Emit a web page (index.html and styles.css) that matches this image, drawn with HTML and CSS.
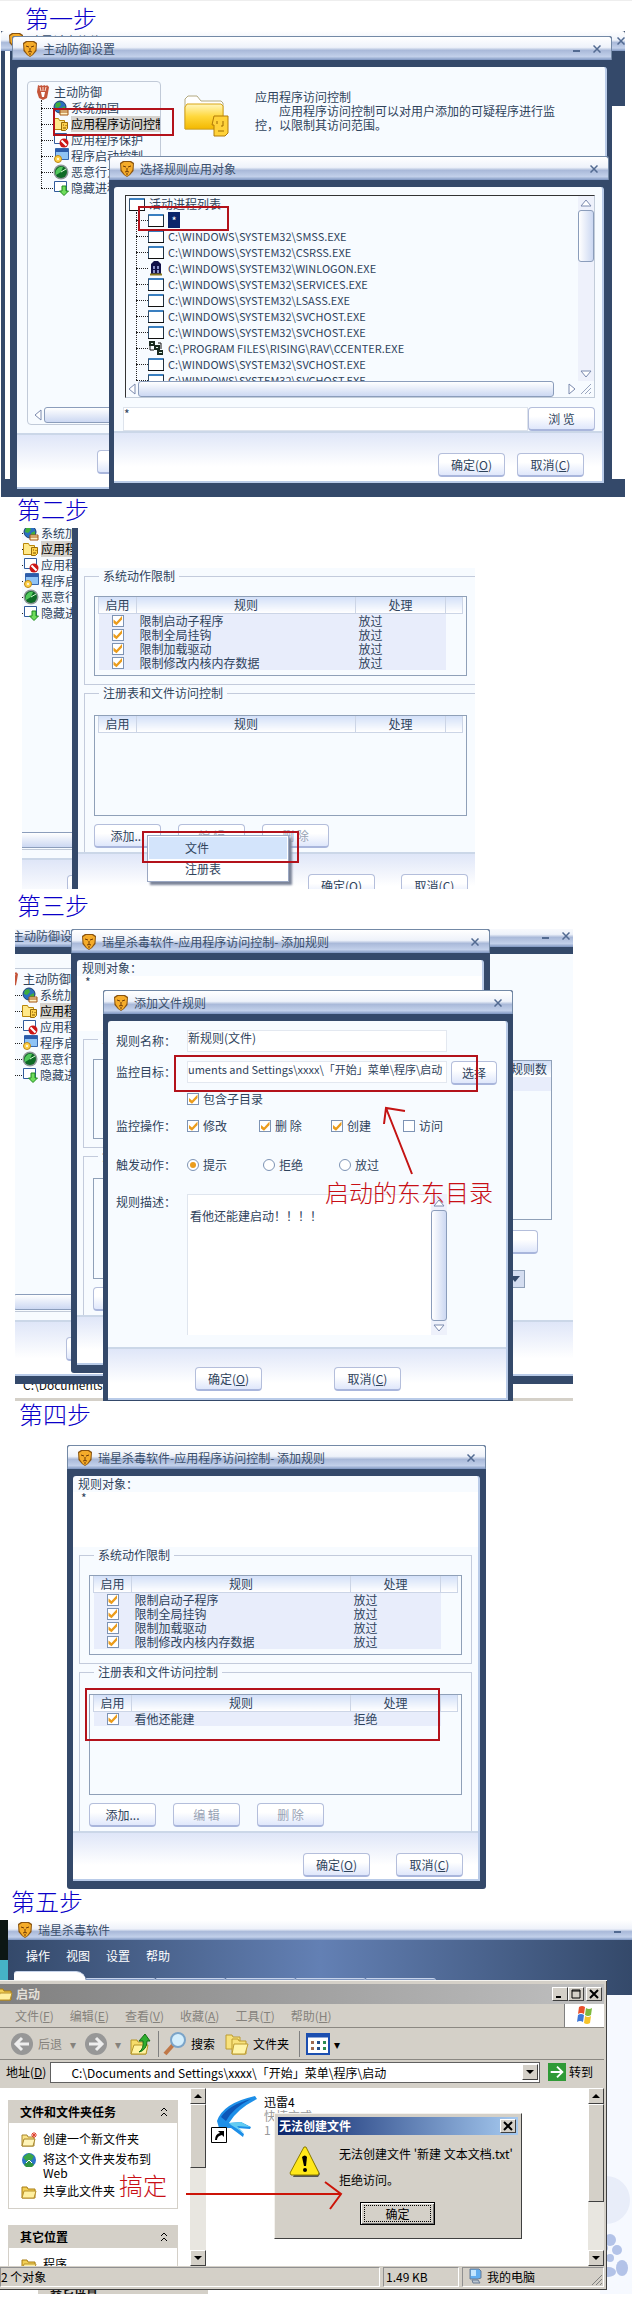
FILE: index.html
```
<!DOCTYPE html>
<html lang="zh-CN">
<head>
    <meta charset="UTF-8">
    <meta name="viewport" content="width=device-width, initial-scale=1.0">
    <title>瑞星主动防御设置步骤</title>
    <link rel="stylesheet" href="styles.css">
</head>
<body>
    <!-- shared icons -->
    <svg class="sprite" aria-hidden="true">
        <symbol id="lion" viewBox="0 0 14 16">
            <path d="M0 2 3 0h8l3 2-.5 8L10 14l-3 2-3-2-3.500-4z" fill="#8a5410"/>
            <path d="M1 3 4 1h6l3 2-.6 6L9 14l-2 1-2-1-3.400-5z" fill="#f5ac2a"/>
            <path d="M3 5l3 1M11 5 8 6M7 7v3M5 11l2-.5 2 .5M6 13h2" stroke="#6d3905" fill="none"/>
        </symbol>
        <symbol id="close" viewBox="0 0 8 8"><path d="M.5.5l7 7M7.500.5l-7 7" stroke="#526a91" stroke-width="1.500"/></symbol>
        <symbol id="min" viewBox="0 0 8 8"><path d="M0 6h7" stroke="#526a91" stroke-width="2"/></symbol>
        <symbol id="hand" viewBox="0 0 16 16">
            <path d="M2 1l2 1 1-1 2 1 1-1 2 1 1-1 2 2-1 6-1 5-4 2-4-2-2-6z" fill="#c4553a"/>
            <path d="M4 3l1 4M7 3v4M10 3 9 7" stroke="#ffe3d6"/>
            <path d="M5 8h4l-1 5H6z" fill="#fff"/>
        </symbol>
        <symbol id="globe" viewBox="0 0 16 16">
            <circle cx="7" cy="7" r="6" fill="#2a6fc0" stroke="#1b3f70"/>
            <path d="M3 3l4-1 1 3-3 3-3-1zM8 8l4-2v4l-3 2z" fill="#3fae3c"/>
            <path d="M7 10h8v5H7z" fill="#fff1c4" stroke="#a4550e"/><path d="M7 12h8" stroke="#a4550e"/>
        </symbol>
        <symbol id="app" viewBox="0 0 16 16">
            <path d="M.5 2.500h5l1 2h5v9H.5z" fill="#ffe98a" stroke="#b8860b"/>
            <path d="M8.500 6.500h6v6l-2 2h-4z" fill="#ffd24a" stroke="#9a6c08"/>
            <path d="M10 9h1M13 9v1M10 12h3" stroke="#7a5200"/>
        </symbol>
        <symbol id="deny" viewBox="0 0 16 16">
            <path d="M1.500 1.500h12v10h-12z" fill="#fff" stroke="#315b9c"/>
            <circle cx="11" cy="11" r="4.500" fill="#cc1515"/><path d="M8.500 8.500l5 5" stroke="#fff" stroke-width="2"/>
        </symbol>
        <symbol id="start" viewBox="0 0 16 16">
            <path d="M2.500.5h13v11h-13z" fill="#8ec3f5" stroke="#3566ad"/><path d="M2 1h13v3H2z" fill="#2b5cab"/>
            <circle cx="5" cy="11" r="3.500" fill="#ffd24a" stroke="#bb8514"/><circle cx="5" cy="11" r="1" fill="#fff"/>
        </symbol>
        <symbol id="radar" viewBox="0 0 16 16">
            <circle cx="8" cy="8" r="7.500" fill="#8e9798"/><circle cx="8" cy="8" r="6" fill="#0e6b26"/>
            <path d="M8 8 3 11a6 6 0 0 1 7-8z" fill="#52c95c"/><path d="M8 8l5-3" stroke="#d7ffd4"/>
        </symbol>
        <symbol id="down" viewBox="0 0 16 16">
            <path d="M1.500 1.500h12v10h-12z" fill="#fff" stroke="#315b9c"/>
            <path d="M9 6h4v5h2.500L11 15.500 6.500 11H9z" fill="#6fdc5c" stroke="#1d8a1d"/>
        </symbol>
        <symbol id="exe" viewBox="0 0 16 16"><path d="M.5 2.500h15v12H.5z" fill="#fff" stroke="#31506f"/><path d="M1 3h14" stroke="#3a7fc0" stroke-width="2"/><path d="M0 14.500h16V3" stroke="#111" fill="none"/></symbol>
        <symbol id="logon" viewBox="0 0 16 16"><path d="M3 14V4l3-3h4l3 3v10z" fill="#101048"/><path d="M5 6h2v3H5zM9 6h2v3H9zM5 10h2v3H5zM9 10h2v3H9z" fill="#8890c8"/><path d="M2 14.500h12" stroke="#8a7a20" stroke-width="2"/></symbol>
        <symbol id="center" viewBox="0 0 16 16"><path d="M1 1h6v5H1zM6 5h6v5H6zM9 10h6v5H9z" fill="#1a2a20"/><path d="M3 3h2v1H3zM8 7h2v1H8zM11 12h3v1h-3z" fill="#d8f0e0"/><path d="M2 6v4h4M10 3h3v6" stroke="#111" fill="none"/></symbol>
        <symbol id="folder" viewBox="0 0 16 16">
            <path d="M1 3h5l1 2h7v9H1z" fill="#f2cf55" stroke="#a87c12"/><path d="M3 7h12l-2 7H1z" fill="#fff0a0" stroke="#b8902a"/>
        </symbol>
        <symbol id="left" viewBox="0 0 8 12"><path d="M7 1v10L1 6z" fill="#fff" stroke="#7b8aae"/></symbol>
        <symbol id="right" viewBox="0 0 8 12"><path d="M1 1v10l6-5z" fill="#fff" stroke="#7b8aae"/></symbol>
        <symbol id="up" viewBox="0 0 12 8"><path d="M1 7h10L6 1z" fill="#fff" stroke="#7b8aae"/></symbol>
        <symbol id="dn" viewBox="0 0 12 8"><path d="M1 1h10L6 7z" fill="#fff" stroke="#7b8aae"/></symbol>
    </svg>

    <h2 class="step first">第一步</h2>
    <section class="shot shot1">
        <div class="back-win">
            <div class="titlebar"><svg class="lion"><use href="#lion"/></svg><span>瑞星杀毒软件</span>
                <button class="tb" aria-label="关闭"><svg><use href="#close"/></svg></button></div>
            <div class="back-body"></div>
        </div>

        <div class="win settings">
            <div class="titlebar"><svg class="lion"><use href="#lion"/></svg><span>主动防御设置</span>
                <button class="tb" aria-label="最小化"><svg><use href="#min"/></svg></button>
                <button class="tb" aria-label="关闭"><svg><use href="#close"/></svg></button></div>
            <div class="panel">
                <div class="main">
                    <div class="tree-box">
                        <div class="root"><svg><use href="#hand"/></svg>主动防御</div>
                        <ul class="tree">
                            <li><svg><use href="#globe"/></svg><span>系统加固</span></li>
                            <li><svg><use href="#app"/></svg><span class="sel">应用程序访问控制</span></li>
                            <li><svg><use href="#deny"/></svg><span>应用程序保护</span></li>
                            <li><svg><use href="#start"/></svg><span>程序启动控制</span></li>
                            <li><svg><use href="#radar"/></svg><span>恶意行为检测</span></li>
                            <li><svg><use href="#down"/></svg><span>隐藏进程检测</span></li>
                        </ul>
                        <div class="hscroll"><svg><use href="#left"/></svg><i class="thumb"></i></div>
                    </div>
                    <svg class="big-folder" viewBox="0 0 46 42">
                        <defs><linearGradient id="gold" x1="0" y1="0" x2="0" y2="1"><stop offset="0" stop-color="#fff6c0"/><stop offset=".5" stop-color="#ffd83c"/><stop offset="1" stop-color="#f3b800"/></linearGradient></defs>
                        <path d="M2 34V4l3-3h9l4 5h20l2 2v26z" fill="#fff" stroke="#b3a980"/>
                        <path d="M2 34V12l2-3h34l2 2v23z" fill="url(#gold)" stroke="#d9a514"/>
                        <path d="M31 21h14v17l-3 3H31V30h-2z" fill="#ffd23a" stroke="#b17b09"/>
                        <path d="M34 26v3M40 26v5h-2M35 36h6" stroke="#9c6800" fill="none"/>
                    </svg>
                    <div class="intro">
                        <p>应用程序访问控制</p>
                        <p class="indent">应用程序访问控制可以对用户添加的可疑程序进行监控，以限制其访问范围。</p>
                    </div>
                </div>
                <div class="foot left"><button class="btn"></button></div>
            </div>
        </div>

        <div class="win picker">
            <div class="titlebar"><svg class="lion"><use href="#lion"/></svg><span>选择规则应用对象</span>
                <button class="tb" aria-label="关闭"><svg><use href="#close"/></svg></button></div>
            <div class="panel">
                <div class="proc-box">
                    <div class="procs">
                        <div class="root"><svg><use href="#exe"/></svg>活动进程列表</div>
                        <ul class="tree">
                            <li><svg><use href="#exe"/></svg><span class="star">*</span></li>
                            <li><svg><use href="#exe"/></svg><span>C:\WINDOWS\SYSTEM32\SMSS.EXE</span></li>
                            <li><svg><use href="#exe"/></svg><span>C:\WINDOWS\SYSTEM32\CSRSS.EXE</span></li>
                            <li><svg><use href="#logon"/></svg><span>C:\WINDOWS\SYSTEM32\WINLOGON.EXE</span></li>
                            <li><svg><use href="#exe"/></svg><span>C:\WINDOWS\SYSTEM32\SERVICES.EXE</span></li>
                            <li><svg><use href="#exe"/></svg><span>C:\WINDOWS\SYSTEM32\LSASS.EXE</span></li>
                            <li><svg><use href="#exe"/></svg><span>C:\WINDOWS\SYSTEM32\SVCHOST.EXE</span></li>
                            <li><svg><use href="#exe"/></svg><span>C:\WINDOWS\SYSTEM32\SVCHOST.EXE</span></li>
                            <li><svg><use href="#center"/></svg><span>C:\PROGRAM FILES\RISING\RAV\CCENTER.EXE</span></li>
                            <li><svg><use href="#exe"/></svg><span>C:\WINDOWS\SYSTEM32\SVCHOST.EXE</span></li>
                            <li><svg><use href="#exe"/></svg><span>C:\WINDOWS\SYSTEM32\SVCHOST.EXE</span></li>
                        </ul>
                    </div>
                    <div class="vscroll"><svg><use href="#up"/></svg><i class="thumb short"></i><svg class="end"><use href="#dn"/></svg></div>
                    <div class="hscroll"><svg><use href="#left"/></svg><i class="thumb"></i><svg><use href="#right"/></svg></div>
                    <svg class="grip" viewBox="0 0 12 12"><path d="M1 11 11 1M5 11l6-6M9 11l2-2" stroke="#9aa6bf"/></svg>
                </div>
                <div class="browse"><input type="text" value="*" aria-label="对象"><button class="btn">浏 览</button></div>
                <div class="foot"><button class="btn">确定(<u>O</u>)</button><button class="btn">取消(<u>C</u>)</button></div>
            </div>
        </div>
        <div class="mark mark1a"></div>
        <div class="mark mark1b"></div>
    </section>

    <h2 class="step">第二步</h2>
    <section class="shot shot2">
        <div class="win settings">
            <div class="titlebar"></div>
            <div class="panel">
                <div class="main">
                    <div class="tree-box">
                        <div class="root"><svg><use href="#hand"/></svg></div>
                        <ul class="tree">
                            <li><svg><use href="#globe"/></svg><span>系统加固</span></li>
                            <li><svg><use href="#app"/></svg><span class="sel">应用程序访问控制</span></li>
                            <li><svg><use href="#deny"/></svg><span>应用程序保护</span></li>
                            <li><svg><use href="#start"/></svg><span>程序启动控制</span></li>
                            <li><svg><use href="#radar"/></svg><span>恶意行为检测</span></li>
                            <li><svg><use href="#down"/></svg><span>隐藏进程检测</span></li>
                        </ul>
                        <div class="hscroll"><svg><use href="#left"/></svg><i class="thumb"></i></div>
                    </div>
                </div>
                <div class="foot left"><button class="btn"></button></div>
            </div>
        </div>

        <div class="win rules">
            <div class="titlebar"></div>
            <div class="panel">
                <div class="target"></div>
                <div class="target-list"></div>
                <fieldset>
                    <legend>系统动作限制</legend>
                    <div class="list">
                        <table>
                            <thead><tr><th class="c1">启用</th><th class="c2">规则</th><th class="c3">处理</th><th></th></tr></thead>
                            <tbody>
                                <tr><td><input type="checkbox" checked aria-label="限制启动子程序"></td><td>限制启动子程序</td><td>放过</td><td></td></tr>
                                <tr><td><input type="checkbox" checked aria-label="限制全局挂钩"></td><td>限制全局挂钩</td><td>放过</td><td></td></tr>
                                <tr><td><input type="checkbox" checked aria-label="限制加载驱动"></td><td>限制加载驱动</td><td>放过</td><td></td></tr>
                                <tr><td><input type="checkbox" checked aria-label="限制修改内核内存数据"></td><td>限制修改内核内存数据</td><td>放过</td><td></td></tr>
                            </tbody>
                        </table>
                    </div>
                </fieldset>
                <fieldset>
                    <legend>注册表和文件访问控制</legend>
                    <div class="list tall">
                        <table>
                            <thead><tr><th class="c1">启用</th><th class="c2">规则</th><th class="c3">处理</th><th></th></tr></thead>
                        </table>
                    </div>
                    <div class="tools"><button class="btn">添加...</button><button class="btn" disabled>编 辑</button><button class="btn" disabled>删 除</button></div>
                </fieldset>
                <div class="foot"><button class="btn">确定(O)</button><button class="btn">取消(C)</button></div>
            </div>
        </div>
        <div class="popup">
            <button class="on">文件</button>
            <button>注册表</button>
        </div>
        <div class="mark mark2"></div>
    </section>

    <h2 class="step third">第三步</h2>
    <section class="shot shot3">
        <div class="under">C:\Documents and Settings</div>
        <div class="win settings">
            <div class="titlebar"><svg class="lion"><use href="#lion"/></svg><span>主动防御设置</span>
                <button class="tb" aria-label="最小化"><svg><use href="#min"/></svg></button>
                <button class="tb" aria-label="关闭"><svg><use href="#close"/></svg></button></div>
            <div class="panel">
                <div class="main">
                    <div class="tree-box">
                        <div class="root"><svg><use href="#hand"/></svg>主动防御</div>
                        <ul class="tree">
                            <li><svg><use href="#globe"/></svg><span>系统加固</span></li>
                            <li><svg><use href="#app"/></svg><span class="sel">应用程序访问控制</span></li>
                            <li><svg><use href="#deny"/></svg><span>应用程序保护</span></li>
                            <li><svg><use href="#start"/></svg><span>程序启动控制</span></li>
                            <li><svg><use href="#radar"/></svg><span>恶意行为检测</span></li>
                            <li><svg><use href="#down"/></svg><span>隐藏进程检测</span></li>
                        </ul>
                        <div class="hscroll"><svg><use href="#left"/></svg><i class="thumb"></i></div>
                    </div>
                    <div class="side">
                        <p class="side-text">监</p>
                        <div class="side-list"><div class="side-head">规则数</div><div class="side-row"></div></div>
                        <button class="btn"></button>
                        <div class="drop"><svg viewBox="0 0 10 6"><path d="M0 0h10L5 6z" fill="#34496a"/></svg></div>
                    </div>
                </div>
                <div class="foot left"><button class="btn"></button></div>
            </div>
        </div>

        <div class="win rules">
            <div class="titlebar"><svg class="lion"><use href="#lion"/></svg><span>瑞星杀毒软件-应用程序访问控制- 添加规则</span>
                <button class="tb" aria-label="关闭"><svg><use href="#close"/></svg></button></div>
            <div class="panel">
                <div class="target">规则对象：</div>
                <div class="target-list">*</div>
                <fieldset>
                    <legend>系统动作限制</legend>
                    <div class="list"></div>
                </fieldset>
                <fieldset>
                    <legend>注册表和文件访问控制</legend>
                    <div class="list tall"></div>
                    <div class="tools"><button class="btn"></button></div>
                </fieldset>
                <div class="foot"></div>
            </div>
        </div>

        <div class="win file-rule">
            <div class="titlebar"><svg class="lion"><use href="#lion"/></svg><span>添加文件规则</span>
                <button class="tb" aria-label="关闭"><svg><use href="#close"/></svg></button></div>
            <div class="panel">
                <form class="form">
                    <div class="row name"><label for="rname">规则名称：</label><input type="text" id="rname" value="新规则(文件)"></div>
                    <div class="row path"><label for="rpath">监控目标：</label><input type="text" id="rpath" value="uments and Settings\xxxx\「开始」菜单\程序\启动"><button type="button" class="btn">选择</button></div>
                    <div class="row sub"><span></span><label><input type="checkbox" checked>包含子目录</label></div>
                    <div class="row ops"><span>监控操作：</span>
                        <label><input type="checkbox" checked>修改</label>
                        <label><input type="checkbox" checked>删 除</label>
                        <label><input type="checkbox" checked>创建</label>
                        <label><input type="checkbox">访问</label></div>
                    <div class="row acts"><span>触发动作：</span>
                        <label><input type="radio" name="act" checked>提示</label>
                        <label><input type="radio" name="act">拒绝</label>
                        <label><input type="radio" name="act">放过</label></div>
                    <div class="row desc"><label for="rdesc">规则描述：</label>
                        <textarea id="rdesc">看他还能建启动！！！！</textarea>
                        <div class="vscroll"><svg><use href="#up"/></svg><i class="thumb"></i><svg><use href="#dn"/></svg></div></div>
                </form>
                <div class="foot"><button class="btn">确定(<u>O</u>)</button><button class="btn">取消(<u>C</u>)</button></div>
            </div>
        </div>
        <div class="mark mark3"></div>
        <svg class="arrow3" viewBox="0 0 30 70"><path d="M29 68 3 2M1 18 3 2l19 3" fill="none" stroke="#c41414" stroke-width="2"/></svg>
        <div class="note note3">启动的东东目录</div>
    </section>

    <h2 class="step fourth">第四步</h2>
    <section class="shot shot4">
        <div class="win rules">
            <div class="titlebar"><svg class="lion"><use href="#lion"/></svg><span>瑞星杀毒软件-应用程序访问控制- 添加规则</span>
                <button class="tb" aria-label="关闭"><svg><use href="#close"/></svg></button></div>
            <div class="panel">
                <div class="target">规则对象：</div>
                <div class="target-list">*</div>
                <fieldset>
                    <legend>系统动作限制</legend>
                    <div class="list">
                        <table>
                            <thead><tr><th class="c1">启用</th><th class="c2">规则</th><th class="c3">处理</th><th></th></tr></thead>
                            <tbody>
                                <tr><td><input type="checkbox" checked aria-label="限制启动子程序"></td><td>限制启动子程序</td><td>放过</td><td></td></tr>
                                <tr><td><input type="checkbox" checked aria-label="限制全局挂钩"></td><td>限制全局挂钩</td><td>放过</td><td></td></tr>
                                <tr><td><input type="checkbox" checked aria-label="限制加载驱动"></td><td>限制加载驱动</td><td>放过</td><td></td></tr>
                                <tr><td><input type="checkbox" checked aria-label="限制修改内核内存数据"></td><td>限制修改内核内存数据</td><td>放过</td><td></td></tr>
                            </tbody>
                        </table>
                    </div>
                </fieldset>
                <fieldset>
                    <legend>注册表和文件访问控制</legend>
                    <div class="list tall">
                        <table>
                            <thead><tr><th class="c1">启用</th><th class="c2">规则</th><th class="c3">处理</th><th></th></tr></thead>
                            <tbody>
                                <tr><td><input type="checkbox" checked aria-label="看他还能建"></td><td>看他还能建</td><td>拒绝</td><td></td></tr>
                            </tbody>
                        </table>
                    </div>
                    <div class="tools"><button class="btn">添加...</button><button class="btn" disabled>编 辑</button><button class="btn" disabled>删 除</button></div>
                </fieldset>
                <div class="foot"><button class="btn">确定(<u>O</u>)</button><button class="btn">取消(<u>C</u>)</button></div>
            </div>
        </div>
        <div class="mark mark4"></div>
    </section>

    <h2 class="step fifth">第五步</h2>
    <section class="shot shot5">
        <div class="rav">
            <div class="titlebar"><svg class="lion"><use href="#lion"/></svg><span>瑞星杀毒软件</span>
                <button class="tb" aria-label="最小化"><svg><use href="#min"/></svg></button></div>
            <div class="rav-head">
                <nav><a href="#">操作</a><a href="#">视图</a><a href="#">设置</a><a href="#">帮助</a></nav>
                <div class="tabs"><i class="on"></i><i></i><i></i><i></i><i></i><i></i></div>
            </div>
            <svg class="flower" viewBox="0 0 34 150"><circle cx="8" cy="30" r="24" fill="#e8edf9"/><g fill="#b3c3e8"><circle cx="12" cy="70" r="6"/><circle cx="5" cy="78" r="5"/><circle cx="19" cy="80" r="5"/><circle cx="12" cy="88" r="4"/><ellipse cx="10" cy="102" rx="8" ry="5"/><ellipse cx="24" cy="98" rx="6" ry="8"/></g></svg>
        </div>
        <div class="desk"></div>
        <div class="strip"><span>其它位置</span></div>

        <div class="explorer">
            <div class="xp-title"><svg class="i16"><use href="#folder"/></svg><b>启动</b>
                <button class="cap" aria-label="最小化"><svg viewBox="0 0 10 10"><path d="M1 8h5" stroke="#000" stroke-width="2"/></svg></button><button class="cap" aria-label="最大化"><svg viewBox="0 0 10 10"><path d="M1 1h8v8H1zM1 2h8" fill="none" stroke="#000"/></svg></button><button class="cap gap" aria-label="关闭"><svg viewBox="0 0 10 10"><path d="M1 1l8 8M9 1 1 9" stroke="#000" stroke-width="2"/></svg></button></div>
            <div class="xp-menu">
                <a href="#">文件(<u>F</u>)</a><a href="#">编辑(<u>E</u>)</a><a href="#">查看(<u>V</u>)</a><a href="#">收藏(<u>A</u>)</a><a href="#">工具(<u>T</u>)</a><a href="#">帮助(<u>H</u>)</a>
                <div class="flag"><svg viewBox="0 0 20 20"><path d="M4 2q3-2 6 0L9 9q-3-2-6 0z" fill="#e8502c"/><path d="M11 3q3 2 6 0l-1 7q-3 2-6 0z" fill="#7cb93e"/><path d="M3 10q3-2 6 0l-1 7q-3-2-6 0z" fill="#3f78d8"/><path d="M10 11q3 2 6 0l-1 7q-3 2-6 0z" fill="#f6c32a"/></svg></div>
            </div>
            <div class="xp-tools">
                <button class="dim"><svg class="i24" viewBox="0 0 24 24"><circle cx="12" cy="12" r="11" fill="#979797"/><path d="M19 12H7M12 6l-6 6 6 6" fill="none" stroke="#eee" stroke-width="3"/></svg>后退</button>
                <span class="tri">▾</span>
                <button class="dim" aria-label="前进"><svg class="i24" viewBox="0 0 24 24"><circle cx="12" cy="12" r="11" fill="#979797"/><path d="M5 12h12M12 6l6 6-6 6" fill="none" stroke="#eee" stroke-width="3"/></svg></button>
                <span class="tri fwd">▾</span>
                <button class="upbtn" aria-label="向上"><svg class="i24" viewBox="0 0 24 24"><path d="M3 8h6l1 2h8v12H3z" fill="#f5dc6a" stroke="#b59528"/><path d="M6 13h14l-2 9H3z" fill="#fff3a0" stroke="#b59528"/><path d="M11 20q5-3 4-11h-4l6-7 5 7h-3q0 9-8 11z" fill="#2fae2f" stroke="#157015"/></svg></button>
                <button class="search"><svg class="i24" viewBox="0 0 24 24"><path d="M2 22l8-9" stroke="#c07848" stroke-width="4"/><circle cx="15" cy="8" r="7" fill="#d4eefc" stroke="#7ba4c8" stroke-width="2"/></svg>搜索</button>
                <button class="folders"><svg class="i24" viewBox="0 0 24 24"><path d="M1 3h6l1 2h7v12H1z" fill="#f8e27c" stroke="#bd9c30"/><path d="M7 7h6l1 2h7v13H7z" fill="#f8e27c" stroke="#bd9c30"/><path d="M9 12h14l-3 10H7z" fill="#fff4a8" stroke="#bd9c30"/></svg>文件夹</button>
                <button class="views" aria-label="查看方式"><svg class="i24" viewBox="0 0 24 24"><path d="M1 2h22v20H1z" fill="#fff" stroke="#1c4fb0" stroke-width="2"/><path d="M1 4h22" stroke="#1c4fb0" stroke-width="3"/><path d="M5 9h3v3H5zM5 15h3v3H5z" fill="#a06a50"/><path d="M11 9h3v3h-3zM11 15h3v3h-3z" fill="#27508c"/><path d="M17 9h3v3h-3zM17 15h3v3h-3z" fill="#2c8c50"/></svg>▾</button>
            </div>
            <div class="xp-addr">
                <label for="addr">地址(<u>D</u>)</label>
                <div class="addr-box"><input type="text" id="addr" value="C:\Documents and Settings\xxxx\「开始」菜单\程序\启动"><button class="sb" aria-label="展开"><svg viewBox="0 0 8 4"><path d="M0 0h8L4 4z"/></svg></button></div>
                <button class="go"><svg viewBox="0 0 20 20"><path d="M0 0h20v20H0z" fill="#2f9a36"/><path d="M3 10h12M10 4l6 6-6 6" fill="none" stroke="#fff" stroke-width="2"/></svg>转到</button>
            </div>
            <div class="xp-body">
                <aside>
                    <h3>文件和文件夹任务<svg viewBox="0 0 8 10"><path d="M1 4l3-3 3 3M1 9l3-3 3 3" fill="none" stroke="#000"/></svg></h3>
                    <ul>
                        <li><svg class="i16" viewBox="0 0 16 16"><path d="M1 3h5l1 2h6v9H1z" fill="#fbe48a" stroke="#a8862c"/><path d="M3 7h11l-2 7H1z" fill="#fff5b8" stroke="#a8862c"/><path d="M13 0v6M10 3h6M11 1l4 4M15 1l-4 4" stroke="#e0402c"/></svg><a href="#">创建一个新文件夹</a></li>
                        <li><svg class="i16" viewBox="0 0 16 16"><circle cx="8" cy="8" r="7" fill="#2b74c8"/><path d="M2 5l6-4 5 3-2 4-6 1z" fill="#3aa648"/><path d="M3 13l5-6 5 6-2 2H5z" fill="#2f9440"/><path d="M5 11l3-3 3 3" stroke="#fff" fill="none"/></svg><a href="#">将这个文件夹发布到 Web</a></li>
                        <li><svg class="i16"><use href="#folder"/></svg><a href="#">共享此文件夹</a></li>
                    </ul>
                    <h3>其它位置<svg viewBox="0 0 8 10"><path d="M1 4l3-3 3 3M1 9l3-3 3 3" fill="none" stroke="#000"/></svg></h3>
                    <ul><li><svg class="i16"><use href="#folder"/></svg><a href="#">程序</a></li></ul>
                </aside>
                <div class="xp-scroll"><button class="sb" aria-label="上"><svg viewBox="0 0 8 4"><path d="M0 4h8L4 0z"/></svg></button><i></i><button class="sb" aria-label="下"><svg viewBox="0 0 8 4"><path d="M0 0h8L4 4z"/></svg></button></div>
                <div class="files">
                    <svg class="link" viewBox="0 0 48 48"><path d="M6 26Q12 8 44 1l2 3Q26 14 18 28l12-1 10 5-1 2-13-1 7 6-1 3-12-9H8z" fill="#1d8fe8"/><path d="M10 22Q18 10 40 4 22 13 15 26z" fill="#0d57b8"/><path d="M18 28l12-1 9 5-13-1 7 7-13-8z" fill="#63ccf2"/><path d="M.5 32.500h15v15H.5z" fill="#fff" stroke="#000"/><path d="M4 45q0-6 5-7l-2-2h6v6l-2-2q-5 1-5 5z"/></svg>
                    <div><p>迅雷4</p><p class="gray">快捷方式</p><p class="gray">1 KB</p></div>
                </div>
                <div class="xp-scroll wide"><button class="sb" aria-label="上"><svg viewBox="0 0 8 4"><path d="M0 4h8L4 0z"/></svg></button><i></i><button class="sb" aria-label="下"><svg viewBox="0 0 8 4"><path d="M0 0h8L4 4z"/></svg></button></div>
            </div>
            <div class="xp-status"><span class="objs">2 个对象</span><span class="size">1.49 KB</span><span class="where"><svg class="i16" viewBox="0 0 16 16"><path d="M3 1h9l2 2v7l-3 1H3z" fill="#62aef0" stroke="#6a7c94"/><path d="M4 2h5v6H4z" fill="#c4e6ff"/><path d="M5 12h6l2 3H6z" fill="#b8c4d0" stroke="#6a7c94"/></svg>我的电脑<svg class="grip" viewBox="0 0 12 12"><path d="M1 11 11 1M5 11l6-6M9 11l2-2" stroke="#808080"/></svg></span></div>
        </div>

        <div class="alert">
            <div class="alert-title"><b>无法创建文件</b><button class="cap" aria-label="关闭"><svg viewBox="0 0 10 10"><path d="M1 1l8 8M9 1 1 9" stroke="#000" stroke-width="2"/></svg></button></div>
            <div class="alert-body">
                <svg viewBox="0 0 32 32"><path d="M17 2l14 26-2 3H4z" fill="#555"/><path d="M15 1h2l13 26-1 2H2l-1-2z" fill="#ffe81a" stroke="#8c7c00"/><path d="M13 11q3-3 5 0l-1 9h-2z"/><circle cx="16" cy="24" r="2"/></svg>
                <div><p>无法创建文件 '新建 文本文档.txt'</p><p>拒绝访问。</p></div>
            </div>
            <button class="ok"><span>确定</span></button>
        </div>
        <svg class="arrow5" viewBox="0 0 160 30"><path d="M0 13h155M139 1l16 12-11 15" fill="none" stroke="#cc1408" stroke-width="2"/></svg>
        <div class="note note5">搞定</div>
    </section>
</body>
</html>
```
FILE: styles.css
```
* {
    box-sizing: border-box;
}
body {
    margin: 0;
    padding-bottom: 21px;
    background: #fff;
    color: #2f435c;
    font-family: "Noto Sans CJK SC", "Noto Sans", sans-serif;
    font-size: 12px;
    line-height: 16px;
}
p, ul, h3, fieldset, legend {
    margin: 0;
    padding: 0;
}
ul {
    list-style: none;
}
a {
    color: inherit;
    text-decoration: none;
}
button, input, textarea {
    margin: 0;
    padding: 0;
    font: inherit;
    color: inherit;
}
svg {
    display: block;
    flex: none;
}
.sprite {
    position: absolute;
    width: 0;
    height: 0;
}
.i16 {
    width: 16px;
    height: 16px;
}
.i24 {
    width: 24px;
    height: 24px;
}
.step {
    margin: 0;
    padding: 0 0 7px 17px;
    color: #0a00c8;
    font-size: 24px;
    font-weight: 300;
    line-height: 24px;
}
.step.first {
    padding: 5px 0 2px 25px;
    border-top: 1px solid #eee;
    line-height: 23px;
}
.step.third {
    padding: 4px 0 12px 17px;
}
.step.fourth {
    padding: 1px 0 19px 19px;
}
.step.fifth {
    padding-left: 11px;
}

/* each screenshot clips its own windows */
.shot {
    position: relative;
    overflow: hidden;
}
.shot1 {
    height: 466px;
    margin: 0 7px 0 1px;
    background: #fff;
}
.shot2 {
    height: 361px;
    max-width: 453px;
    margin-left: 22px;
}
.shot3 {
    height: 472px;
    max-width: 558px;
    margin-left: 15px;
}
.shot4 {
    height: 444px;
    max-width: 419px;
    margin-left: 67px;
}
.shot5 {
    height: 374px;
}

/* blue skinned windows */
.titlebar {
    display: flex;
    align-items: center;
    flex: none;
    height: 24px;
    padding: 0 10px;
    background: linear-gradient(#fff 0, #eef2fa 45%, #a9b9d9 58%, #c2d0ea 85%, #7d95c0 100%);
    border: 1px solid #7389a6;
    border-bottom: 0;
    border-radius: 3px 3px 0 0;
    color: #3a4f6c;
}
.titlebar span {
    flex: 1;
    margin-left: 6px;
    white-space: nowrap;
}
.titlebar .lion {
    width: 14px;
    height: 16px;
}
.tb {
    width: 8px;
    height: 8px;
    margin-left: 12px;
    background: none;
    border: 0;
}
.tb svg {
    width: 8px;
    height: 8px;
}
.win {
    position: absolute;
    display: flex;
    flex-direction: column;
    padding-bottom: 8px;
    background: #34496a;
    border-radius: 3px;
}
.panel {
    display: flex;
    flex-direction: column;
    flex: 1;
    margin: 7px 5px 0;
    background: #f7fbff;
    border: solid #b9cbe8;
    border-width: 0 2px 2px 0;
    border-radius: 3px 3px 0 0;
}
.btn {
    width: 67px;
    height: 24px;
    background: linear-gradient(#fff 40%, #dfe7fb);
    border: 1px solid #b4bedb;
    border-bottom: 2px solid #a9b6dc;
    border-radius: 4px;
}
.btn:disabled {
    color: #98a2b4;
}
.foot {
    display: flex;
    align-items: flex-start;
    justify-content: flex-end;
    flex: none;
    padding-top: 20px;
    border-top: 2px solid #cbd7e8;
    background: linear-gradient(#dfe6f8, #fff 70%);
}
.thumb {
    display: block;
    flex: 1;
    border: 1px solid #8b9dbb;
    border-radius: 3px;
    background: linear-gradient(#fff, #ccd8f2);
}
.hscroll {
    display: flex;
    align-items: center;
    height: 16px;
}
.hscroll svg {
    width: 8px;
    height: 12px;
    margin: 0 2px;
}
.hscroll .thumb {
    height: 16px;
}
.vscroll {
    display: flex;
    flex-direction: column;
    align-items: center;
    width: 16px;
    background: #eef1fb;
}
.vscroll svg {
    width: 12px;
    height: 8px;
    margin: 3px 0;
}
.vscroll .thumb {
    width: 16px;
    background: linear-gradient(90deg, #fff, #ccd8f2);
}
.vscroll .short {
    flex: none;
    height: 52px;
}
.vscroll .end {
    margin-top: auto;
}
.mark {
    position: absolute;
    border: 2px solid #b3121b;
}
.note {
    position: absolute;
    color: #c80f16;
    font-size: 24px;
    font-weight: 300;
    line-height: 24px;
    white-space: nowrap;
}

/* trees */
.root {
    display: flex;
    gap: 2px;
    height: 16px;
}
.root svg, .tree svg {
    width: 16px;
    height: 16px;
}
.tree {
    position: relative;
    margin-left: 5px;
}
.tree::before {
    content: "";
    position: absolute;
    top: 0;
    bottom: 8px;
    border-left: 1px dotted #222;
}
.tree li {
    display: flex;
    height: 16px;
    white-space: nowrap;
}
.tree li::before {
    content: "";
    flex: none;
    width: 12px;
    height: 8px;
    border-bottom: 1px dotted #222;
}
.tree li span {
    margin-left: 2px;
}
.tree .sel {
    background: #d6d3ce;
    color: #000;
}

/* active defence settings */
.settings {
    left: 11px;
    top: 5px;
    width: 600px;
    height: 461px;
}
.shot2 .settings {
    left: -40px;
    top: -67px;
}
.shot3 .settings {
    left: -34px;
    top: -6px;
}
.main {
    display: flex;
    flex: 1;
    padding: 14px 0 8px 10px;
}
.tree-box {
    display: flex;
    flex-direction: column;
    flex: none;
    width: 134px;
    padding: 2px 0 1px 8px;
    border: 1px solid #c1cad8;
    border-radius: 4px;
    overflow: hidden;
}
.tree-box .hscroll {
    margin: auto -1px 0 -4px;
}
.foot.left {
    justify-content: flex-start;
    height: 54px;
    padding: 15px 0 0 80px;
}
.big-folder {
    width: 46px;
    height: 42px;
    margin: 14px 26px 0 22px;
}
.intro {
    width: 300px;
    margin-top: 9px;
    line-height: 14px;
}
.indent {
    text-indent: 24px;
}
.back-win {
    height: 100%;
    background: linear-gradient(#34496a 75px, #fff 75px, #fff 448px, #34496a 448px);
}
.back-win .titlebar {
    height: 20px;
    padding: 0 0 0 8px;
    border: 0;
}
.back-body {
    width: 11px;
    height: 428px;
    background: linear-gradient(90deg, #34496a 4px, #fff 4px, #fff 9px, #34496a 9px);
}

/* process picker */
.picker {
    left: 108px;
    top: 125px;
    width: 500px;
    height: 335px;
}
.proc-box {
    display: grid;
    grid-template-columns: 1fr 16px;
    grid-template-rows: 1fr 16px;
    height: 203px;
    margin: 8px 7px 0 11px;
    border: 1px solid #c2ccd9;
    border-color: #333 #c2ccd9 #c2ccd9 #333;
}
.procs {
    overflow: hidden;
    padding-left: 3px;
}
.procs .root {
    gap: 4px;
}
.procs .tree {
    margin-left: 7px;
    font-size: 11px;
}
.procs .tree li span {
    margin-left: 4px;
}
.procs .star {
    width: 12px;
    background: #0a246a;
    color: #fff;
    text-align: center;
}
.proc-box .hscroll svg:last-child {
    margin-left: 14px;
}
.proc-box .grip {
    width: 12px;
    height: 12px;
    margin: 2px;
}
.browse {
    display: flex;
    margin: 9px 7px 0 9px;
}
.browse input {
    flex: 1;
    min-width: 0;
    height: 24px;
    padding-bottom: 12px;
    background: #fff;
    border: 1px solid #dde3ec;
}
.picker .foot {
    flex: 1;
    gap: 12px;
    padding-right: 18px;
}

/* rule dialog */
.rules {
    left: 0;
    top: 0;
    width: 419px;
    height: 444px;
}
.shot2 .rules {
    left: 50px;
    top: -62px;
}
.shot3 .rules {
    left: 56px;
    top: 0;
}
.rules .panel {
    margin: 7px 6px 0;
}
.target {
    height: 16px;
    padding-left: 5px;
}
.target-list {
    height: 55px;
    padding-left: 8px;
    background: #fff;
    line-height: 12px;
}
fieldset {
    margin: 0 6px;
    padding: 0 9px 8px;
    border: 1px solid #c3cbdc;
}
legend {
    margin-left: 5px;
    padding: 0 4px;
}
.list {
    height: 80px;
    margin-top: 12px;
    padding: 0 3px;
    border: 1px solid #8fa0b8;
}
.list.tall {
    height: 101px;
    margin-top: 14px;
}
table {
    width: 100%;
    table-layout: fixed;
    border-collapse: collapse;
}
.c1 {
    width: 38px;
}
.c2 {
    width: 219px;
}
.c3 {
    width: 90px;
}
th {
    height: 16px;
    padding: 0;
    border: 1px solid #ccd5e6;
    border-top: 0;
    background: linear-gradient(#d3e0f8, #fff);
    font-weight: normal;
    line-height: 15px;
}
td {
    height: 14px;
    padding: 0 0 0 3px;
    background: #e8edfb;
    line-height: 14px;
}
td:first-child {
    padding: 0;
    text-align: center;
}
td:last-child {
    background: none;
}
input[type=checkbox], input[type=radio] {
    appearance: none;
    display: inline-block;
    width: 12px;
    height: 12px;
    border: 1px solid #7d93b4;
    background: #fff;
    vertical-align: top;
}
input[type=checkbox]:checked::before {
    content: "";
    display: block;
    width: 10px;
    height: 10px;
    background: #eb9c1c;
    clip-path: polygon(10% 40%, 40% 65%, 95% 5%, 95% 40%, 40% 98%, 10% 75%);
}
input[type=radio] {
    border-radius: 50%;
}
input[type=radio]:checked::before {
    content: "";
    display: block;
    width: 6px;
    height: 6px;
    margin: 2px;
    border-radius: 50%;
    background: #eb9c1c;
}
td input[type=checkbox] {
    margin-top: 1px;
}
.tools {
    display: flex;
    gap: 17px;
    margin: 8px 0 -3px;
}
.rules .foot {
    flex: 1;
    gap: 26px;
    margin-top: -2px;
    padding-right: 15px;
}

/* add menu */
.popup {
    position: absolute;
    left: 125px;
    top: 307px;
    display: flex;
    flex-direction: column;
    width: 142px;
    height: 47px;
    padding: 1px;
    background: #fff;
    border: 1px solid #9aa7c2;
    box-shadow: 3px 3px 2px #7b8499;
}
.popup button {
    flex: 1;
    padding-left: 36px;
    background: none;
    border: 0;
    text-align: left;
}
.popup .on {
    background: #d3e4fb;
}

/* add file rule */
.file-rule {
    left: 88px;
    top: 61px;
    width: 410px;
    height: 418px;
}
.form {
    padding: 9px 8px 12px;
}
.row {
    display: flex;
}
.row > :first-child {
    flex: none;
    width: 71px;
}
.row label:not(:first-child) {
    display: flex;
    align-items: center;
    gap: 4px;
    line-height: 14px;
}
.row input[type=text] {
    width: 260px;
    height: 22px;
    padding-bottom: 6px;
    background: #fff;
    border: 1px solid #e3e8f0;
}
.name, .path {
    line-height: 22px;
}
.path {
    margin-top: 9px;
}
.path input[type=text] {
    font-size: 11px;
}
.path .btn {
    width: 46px;
    margin-left: 4px;
}
.sub {
    margin-top: 7px;
}
.ops {
    margin-top: 12px;
}
.ops label {
    width: 72px;
}
.acts {
    margin-top: 23px;
}
.acts label {
    width: 76px;
}
.desc {
    margin-top: 21px;
}
.desc textarea {
    width: 244px;
    height: 141px;
    padding: 13px 0 0 2px;
    background: #fff;
    border: 1px solid #dfe5ee;
    border-width: 1px 0 0 1px;
    resize: none;
    overflow: hidden;
}
.desc .vscroll {
    padding-top: 2px;
}
.file-rule .foot {
    flex: 1;
    justify-content: flex-start;
    gap: 72px;
    padding: 18px 0 0 87px;
}
.side {
    position: relative;
    flex: 1;
    margin: 24px 22px 0 20px;
}
.side-text {
    margin-left: 336px;
}
.side-list {
    height: 160px;
    margin-top: 52px;
    border: 1px solid #8fa0b8;
}
.side-head {
    padding-right: 4px;
    background: linear-gradient(#d3e0f8, #fff);
    text-align: right;
}
.side-row {
    height: 14px;
    background: #e8edfb;
}
.side .btn {
    display: block;
    margin: 10px 14px 0 auto;
}
.drop {
    width: 20px;
    height: 18px;
    margin: 16px 27px 0 auto;
    padding: 5px 4px;
    border: 1px solid #8fa0b8;
    background: #d4ddf0;
}
.under {
    position: absolute;
    left: 0;
    right: 0;
    bottom: 0;
    height: 24px;
    padding: 0 0 0 8px;
    border-bottom: 3px solid #d4d0c8;
    color: #111;
}

/* red marks */
.mark1a {
    left: 52px;
    top: 77px;
    width: 121px;
    height: 28px;
}
.mark1b {
    left: 137px;
    top: 175px;
    width: 91px;
    height: 25px;
}
.mark2 {
    left: 120px;
    top: 303px;
    width: 157px;
    height: 32px;
}
.mark3 {
    left: 159px;
    top: 126px;
    width: 304px;
    height: 37px;
}
.mark4 {
    left: 18px;
    top: 243px;
    width: 355px;
    height: 53px;
}
.arrow3 {
    position: absolute;
    left: 368px;
    top: 177px;
    width: 30px;
    height: 70px;
}
.note3 {
    left: 310px;
    top: 251px;
}
.arrow5 {
    position: absolute;
    left: 186px;
    top: 261px;
    width: 160px;
    height: 30px;
}
.note5 {
    left: 119px;
    top: 253px;
}

/* main program behind explorer */
.rav {
    position: absolute;
    inset: 0 0 0 8px;
    background: #f6f9ff;
}
.rav .titlebar {
    height: 20px;
    border: 0;
    border-radius: 0;
}
.rav-head {
    height: 55px;
    padding: 8px 6px 0;
    background: linear-gradient(90deg, #34496a, #6380b4 50%, #34496a);
}
.rav-head nav {
    display: flex;
    gap: 16px;
    padding-left: 12px;
    color: #fff;
}
.tabs {
    display: flex;
    align-items: flex-end;
    margin-top: 7px;
}
.tabs i {
    width: 70px;
    height: 3px;
    background: #7f97c2;
    border-top: 1px solid #c6d3ea;
    border-radius: 4px 12px 0 0;
}
.tabs .on {
    width: 72px;
    height: 10px;
    background: #fff;
}
.flower {
    position: absolute;
    right: 0;
    bottom: -26px;
    width: 34px;
    height: 150px;
}
.desk {
    position: absolute;
    left: 0;
    top: 0;
    width: 8px;
    height: 60px;
    background: #0c1714;
    border-bottom: 20px solid #46b3c6;
}
.strip {
    position: absolute;
    left: 0;
    bottom: 0;
    width: 600px;
    height: 6px;
    overflow: hidden;
    background: #fff;
    font-weight: bold;
    line-height: 2px;
}
.strip span {
    display: block;
    width: 170px;
    height: 6px;
    margin-left: 38px;
    padding-left: 12px;
    background: #d4d0c8;
    color: #111;
}

/* explorer */
.explorer {
    position: absolute;
    left: 0;
    top: 60px;
    width: 607px;
    height: 310px;
    padding: 3px 3px 4px 0;
    background: #d4d0c8;
    border: 1px solid #f4f2ee;
    border-width: 1px 0 0;
    box-shadow: inset -1px -1px #404040;
    color: #000;
}
.xp-title {
    display: flex;
    align-items: center;
    height: 20px;
    padding-right: 2px;
    background: linear-gradient(90deg, #808080, #c0c0c0);
    color: #e2dfd8;
}
.xp-title svg.i16 {
    margin-left: -3px;
}
.xp-title b {
    flex: 1;
    margin-left: 3px;
}
.cap, .sb {
    display: flex;
    align-items: center;
    justify-content: center;
    width: 16px;
    height: 14px;
    background: #d4d0c8;
    border: 1px solid;
    border-color: #fff #404040 #404040 #fff;
}
.cap svg {
    width: 10px;
    height: 10px;
}
.cap.gap {
    margin-left: 2px;
}
.sb {
    flex: none;
    height: 16px;
}
.sb svg {
    width: 8px;
    height: 4px;
}
.xp-menu {
    display: flex;
    align-items: center;
    gap: 16px;
    height: 24px;
    padding-left: 15px;
    border-bottom: 1px solid #8b8882;
    color: #85827c;
}
.flag {
    width: 40px;
    height: 23px;
    margin-left: auto;
    padding: 1px 10px;
    background: #fff;
    border-left: 1px solid #808080;
}
.flag svg {
    width: 20px;
    height: 20px;
}
.xp-tools {
    display: flex;
    align-items: center;
    height: 32px;
    padding-left: 10px;
    border-bottom: 1px solid #8b8882;
}
.xp-tools button {
    display: flex;
    align-items: center;
    gap: 4px;
    padding: 0;
    background: none;
    border: 0;
}
.xp-tools .dim {
    color: #85827c;
}
.tri {
    width: 22px;
    text-align: center;
    color: #85827c;
}
.tri.fwd {
    width: 20px;
}
.xp-tools .upbtn {
    padding-right: 6px;
}
.xp-tools .search {
    height: 26px;
    padding: 0 10px 0 4px;
    border-left: 1px solid #808080;
}
.xp-tools .folders {
    height: 26px;
    padding-right: 10px;
    border-right: 1px solid #808080;
}
.xp-tools .views {
    margin-left: 6px;
}
.xp-addr {
    display: flex;
    align-items: center;
    height: 24px;
    padding: 0 11px 0 6px;
}
.addr-box {
    display: flex;
    flex: 1;
    align-items: center;
    height: 21px;
    margin: 0 8px 0 4px;
    padding-right: 1px;
    background: #fff;
    border: 1px solid #606060;
}
.addr-box input {
    flex: 1;
    min-width: 0;
    height: 18px;
    padding-left: 20px;
    border: 0;
}
.go {
    display: flex;
    align-items: center;
    gap: 3px;
    background: none;
    border: 0;
}
.go svg {
    width: 18px;
    height: 18px;
}
.xp-body {
    display: flex;
    height: 178px;
    margin-top: 4px;
    background: #fff;
    overflow: hidden;
}
aside {
    width: 190px;
    padding: 12px 12px 0 8px;
}
aside h3 {
    display: flex;
    align-items: center;
    justify-content: space-between;
    height: 23px;
    padding: 0 10px 0 12px;
    background: #d4d0c8;
    font-size: 12px;
    line-height: 23px;
}
aside h3 svg {
    width: 8px;
    height: 10px;
}
aside ul {
    height: 86px;
    margin-bottom: 16px;
    padding: 9px 10px 0 12px;
    border: 1px solid #d4d0c8;
    border-top: 0;
}
aside li {
    display: flex;
    gap: 6px;
    margin-bottom: 4px;
    line-height: 14px;
}
.xp-scroll {
    display: flex;
    flex-direction: column;
    width: 16px;
    background: #e8e6e0;
}
.xp-scroll i {
    height: 64px;
    margin-bottom: auto;
    background: #d4d0c8;
    border: 1px solid;
    border-color: #fff #404040 #404040 #fff;
}
.xp-scroll.wide i {
    height: 98px;
}
.files {
    display: flex;
    flex: 1;
    gap: 5px;
    padding: 7px 0 0 5px;
    line-height: 14px;
}
.link {
    width: 48px;
    height: 48px;
}
.gray {
    color: #999;
}
.xp-status {
    display: flex;
    gap: 3px;
    margin-top: 1px;
    line-height: 18px;
}
.xp-status > span {
    height: 20px;
    border: 1px solid;
    border-color: #909090 #fff #fff #909090;
}
.objs {
    flex: 1;
}
.size {
    width: 76px;
    padding-left: 2px;
}
.where {
    display: flex;
    gap: 4px;
    width: 142px;
    padding-left: 4px;
}
.where .grip {
    width: 12px;
    height: 12px;
    margin: 6px 0 0 auto;
}

/* error box */
.alert {
    position: absolute;
    left: 274px;
    top: 193px;
    width: 248px;
    height: 126px;
    padding: 3px;
    background: #d4d0c8;
    border: 1px solid;
    border-color: #f4f2ee #404040 #404040 #f4f2ee;
    color: #000;
}
.alert-title {
    display: flex;
    align-items: center;
    justify-content: space-between;
    height: 18px;
    padding: 0 2px 0 1px;
    background: linear-gradient(90deg, #0a246a, #a6caf0);
    color: #fff;
}
.alert-body {
    display: flex;
    gap: 18px;
    padding: 11px 0 0 11px;
    white-space: nowrap;
}
.alert-body svg {
    width: 32px;
    height: 32px;
}
.alert-body p {
    margin-bottom: 10px;
}
.ok {
    display: block;
    width: 75px;
    height: 23px;
    margin: 4px auto 0 82px;
    padding: 1px;
    background: #d4d0c8;
    border: 1px solid #000;
    box-shadow: inset 1px 1px #fff, inset -1px -1px #707070;
}
.ok span {
    display: block;
    margin: 0 2px;
    border: 1px dotted #000;
    line-height: 15px;
}
```
